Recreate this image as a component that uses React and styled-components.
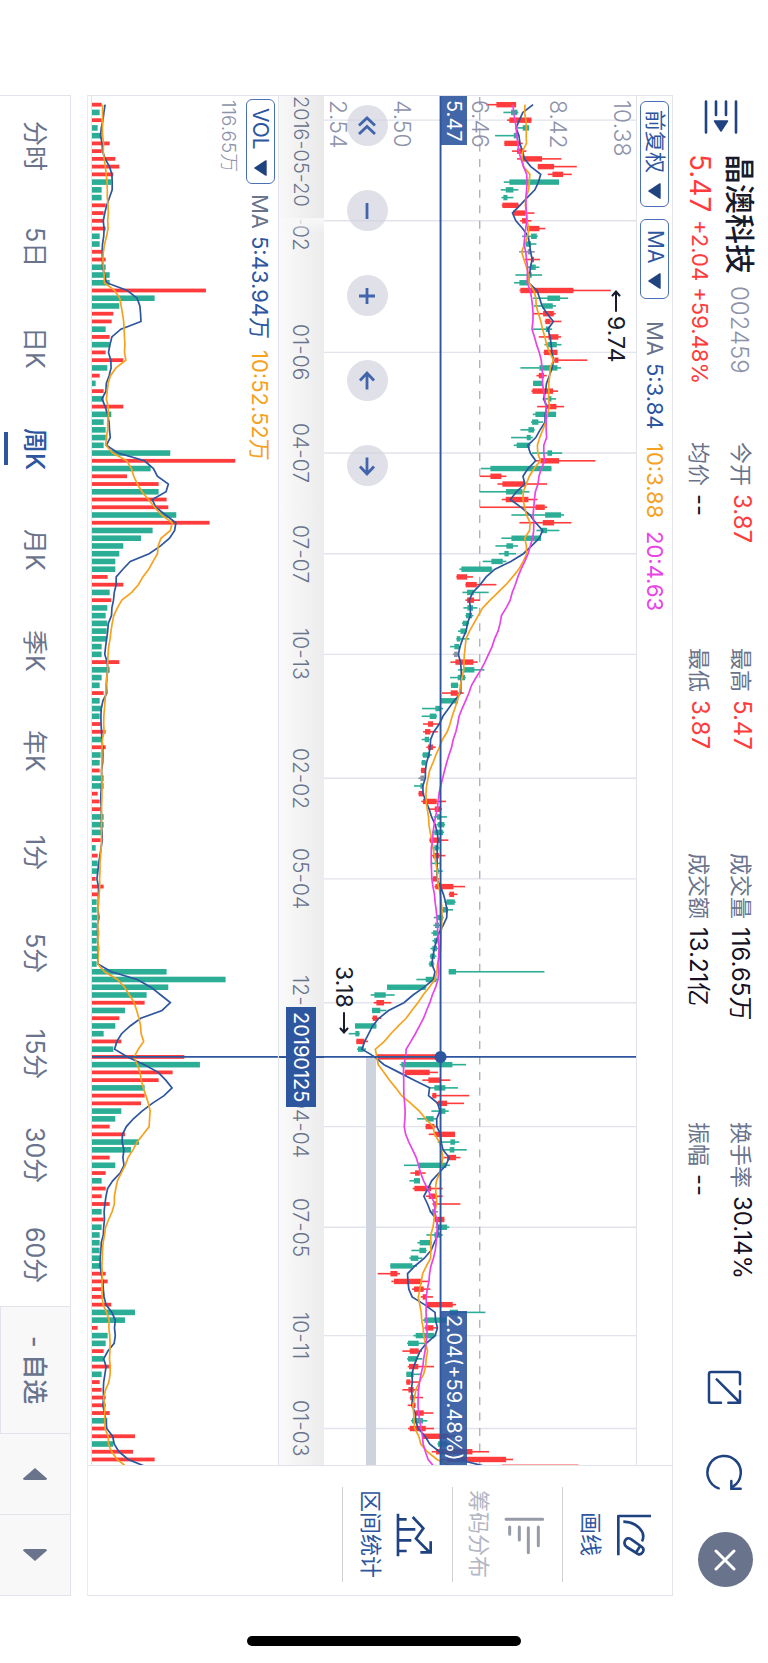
import React from 'react'
import styled, { createGlobalStyle } from 'styled-components'

const colors = {
  blue: '#2d569f',
  navy: '#1f4280',
  slate: '#69738c',
  muted: '#8d92a9',
  ink: '#171b2b',
  red: '#ff3b3b',
  green: '#2bae95',
  orange: '#f5a21f',
  pink: '#e845e6',
  line: '#e2e3eb',
}

// one week per row: [direction, low, body start, body end, high, volume]
const weeks = [
  [1, 497, 528, 587, 587, 65], [-1, 549, 572, 591, 594, 59], [1, 560, 567, 633, 633, 65], [-1, 590, 607, 626, 626, 53],
  [-1, 524, 580, 593, 593, 65], [1, 552, 552, 600, 607, 89], [1, 575, 590, 610, 618, 65], [1, 590, 603, 665, 723, 106],
  [1, 652, 652, 701, 769, 118], [1, 682, 696, 728, 754, 100], [-1, 550, 567, 716, 716, 94], [-1, 541, 556, 579, 594, 65],
  [-1, 543, 549, 561, 579, 65], [1, 544, 546, 594, 600, 77], [1, 575, 578, 615, 642, 71], [1, 599, 605, 618, 633, 71],
  [1, 620, 620, 657, 675, 77], [-1, 605, 632, 649, 652, 59], [-1, 610, 616, 632, 648, 59], [0, 596, 622, 630, 643, 65],
  [1, 612, 632, 641, 659, 77], [-1, 622, 630, 646, 657, 77], [-1, 585, 622, 634, 665, 89], [-1, 581, 597, 622, 622, 89],
  [1, 597, 600, 759, 871, 378], [-1, 638, 681, 719, 743, 224], [-1, 640, 665, 697, 707, 118], [1, 637, 668, 700, 706, 100],
  [1, 673, 675, 690, 723, 95], [-1, 637, 676, 689, 695, 77], [1, 655, 684, 714, 722, 89], [-1, 672, 681, 709, 723, 89],
  [1, 669, 671, 711, 711, 77], [1, 700, 702, 714, 801, 130], [-1, 600, 657, 711, 722, 82], [1, 648, 655, 671, 679, 59],
  [-1, 638, 638, 668, 668, 47], [1, 633, 636, 698, 713, 71], [-1, 667, 683, 693, 707, 71], [1, 650, 681, 708, 731, 130],
  [-1, 637, 645, 707, 707, 94], [-1, 632, 635, 654, 668, 71], [-1, 600, 624, 641, 643, 77], [-1, 572, 619, 631, 637, 82],
  [-1, 580, 589, 628, 630, 71], [-1, 635, 681, 695, 725, 271], [1, 645, 660, 716, 825, 466], [-1, 481, 510, 693, 693, 212],
  [1, 479, 510, 543, 558, 141], [1, 531, 546, 615, 680, 236], [-1, 477, 557, 606, 627, 236], [1, 544, 556, 624, 651, 260],
  [1, 479, 645, 673, 680, 265], [-1, 573, 674, 722, 731, 289], [1, 597, 667, 701, 753, 389], [-1, 648, 661, 680, 717, 218],
  [-1, 543, 573, 662, 662, 183], [-1, 525, 558, 578, 593, 130], [-1, 535, 552, 565, 587, 118], [-1, 487, 513, 547, 558, 106],
  [-1, 417, 423, 514, 516, 106], [1, 408, 409, 440, 458, 83], [1, 435, 436, 469, 528, 130], [-1, 426, 440, 460, 505, 89],
  [1, 435, 440, 461, 479, 94], [-1, 429, 441, 458, 471, 82], [-1, 435, 437, 455, 459, 77], [-1, 425, 427, 444, 446, 82],
  [-1, 413, 420, 438, 440, 80], [-1, 408, 409, 420, 447, 80], [-1, 389, 402, 416, 420, 65], [0, 397, 401, 412, 417, 65],
  [1, 390, 405, 459, 472, 118], [-1, 413, 430, 462, 492, 89], [-1, 389, 412, 434, 436, 65], [-1, 391, 392, 413, 414, 59],
  [1, 365, 391, 412, 430, 71], [-1, 361, 361, 413, 413, 59], [-1, 305, 345, 361, 368, 65], [-1, 304, 328, 348, 350, 59],
  [1, 308, 323, 338, 362, 62], [1, 308, 314, 330, 352, 77], [-1, 304, 313, 326, 328, 65], [1, 318, 323, 338, 346, 77],
  [-1, 306, 307, 329, 334, 62], [-1, 303, 304, 316, 318, 59], [1, 301, 302, 314, 316, 59], [0, 294, 300, 312, 316, 71],
  [-1, 281, 300, 308, 310, 71], [1, 294, 295, 310, 312, 53], [1, 303, 308, 349, 377, 59], [1, 326, 343, 360, 365, 65],
  [-1, 340, 350, 362, 380, 71], [-1, 348, 352, 372, 374, 71], [-1, 335, 342, 368, 371, 65], [1, 327, 328, 362, 384, 62],
  [-1, 336, 342, 355, 358, 47], [1, 334, 338, 356, 375, 53], [-1, 334, 346, 352, 360, 53], [-1, 340, 348, 355, 367, 53],
  [1, 334, 338, 352, 356, 47], [1, 342, 345, 399, 434, 71], [1, 385, 387, 401, 411, 53], [-1, 372, 378, 403, 406, 50],
  [-1, 364, 368, 383, 398, 50], [-1, 340, 350, 368, 370, 58], [-1, 339, 344, 356, 360, 50], [-1, 333, 338, 352, 354, 58],
  [-1, 336, 341, 352, 356, 50], [-1, 330, 336, 350, 353, 58], [-1, 328, 330, 344, 348, 53], [-1, 325, 327, 340, 342, 50],
  [-1, 385, 385, 407, 672, 260], [-1, 288, 316, 348, 352, 437], [-1, 200, 200, 316, 318, 265], [-1, 151, 162, 196, 223, 200],
  [1, 160, 168, 191, 213, 194], [-1, 155, 155, 180, 198, 135], [1, 155, 157, 170, 183, 118], [-1, 104, 104, 168, 168, 106],
  [-1, 85, 105, 117, 118, 71], [1, 108, 108, 132, 143, 124], [-1, 110, 113, 130, 137, 100], [1, 168, 168, 362, 362, 313],
  [-1, 238, 243, 396, 437, 360], [1, 252, 254, 328, 353, 278], [1, 306, 324, 362, 390, 236], [-1, 325, 342, 375, 413, 194],
  [1, 335, 336, 348, 447, 194], [1, 348, 352, 380, 431, 183], [-1, 333, 360, 375, 385, 124], [-1, 290, 316, 340, 348, 106],
  [1, 315, 316, 342, 353, 89], [1, 325, 343, 404, 404, 135], [-1, 352, 390, 404, 417, 177], [-1, 365, 388, 402, 439, 153],
  [1, 370, 380, 407, 420, 89], [-1, 251, 295, 378, 389, 106], [1, 270, 284, 298, 316, 77], [-1, 267, 281, 299, 299, 65],
  [1, 277, 282, 332, 367, 77], [1, 316, 325, 346, 367, 65], [1, 336, 339, 350, 420, 89], [0, 328, 335, 344, 353, 65],
  [1, 340, 343, 372, 372, 71], [-1, 345, 352, 380, 387, 65], [-1, 318, 342, 360, 367, 59], [-1, 291, 298, 332, 335, 59],
  [-1, 273, 297, 317, 319, 59], [-1, 267, 271, 294, 306, 59], [-1, 210, 210, 276, 290, 65], [1, 172, 210, 231, 239, 77],
  [1, 213, 221, 305, 325, 83], [1, 275, 281, 310, 330, 65], [1, 301, 307, 320, 338, 71], [1, 316, 320, 397, 407, 94],
  [-1, 387, 388, 413, 495, 165], [-1, 308, 312, 382, 386, 135], [1, 312, 315, 339, 350, 53], [-1, 279, 286, 342, 348, 83],
  [-1, 260, 263, 295, 315, 77], [1, 246, 268, 295, 305, 71], [-1, 260, 263, 290, 306, 71], [1, 262, 266, 294, 341, 89],
  [-1, 258, 258, 280, 304, 65], [1, 257, 258, 270, 297, 59], [1, 246, 264, 280, 296, 65], [1, 268, 270, 280, 308, 77],
  [1, 262, 274, 285, 286, 77], [1, 280, 285, 310, 339, 89], [-1, 272, 275, 308, 321, 82], [1, 263, 268, 316, 341, 77],
  [1, 305, 307, 385, 410, 165], [-1, 351, 353, 380, 390, 100], [1, 334, 347, 456, 506, 159], [1, 360, 380, 557, 578, 224],
  [1, 544, 544, 774, 774, 360],
]

// history before the first visible week, needed by the moving averages
const closesBefore = [542, 542, 542, 542, 542, 542, 542, 542, 542, 542, 590, 590, 590, 590, 590, 727, 683, 657, 536]
const volumesBefore = [60, 60, 60, 60, 60, 78, 78, 78, 78]

const LENGTH = 1371
const PRICE_SIZE = 312
const VOLUME_SIZE = 186
const CROSS = 123

const along = (i) => 8.7 + i * 7.753
const percent = (i) => `${(along(i) / LENGTH) * 100}%`
const priceX = (v) => (v - 11) / 3
const volumeX = (v) => (v - 36) / 3

const fill = (dir) => (dir > 0 ? colors.red : dir < 0 ? colors.green : '#8c92a4')

const average = (before, values, n, scale) => {
  const all = [...before, ...values]
  return values
    .map((_, i) => {
      const end = before.length + i + 1
      const sum = all.slice(end - n, end).reduce((a, b) => a + b, 0)
      return `${scale(sum / n).toFixed(1)},${along(i).toFixed(1)}`
    })
    .join(' ')
}

const closes = weeks.map(([dir, , a, b]) => (dir < 0 ? a : b))
const volumes = weeks.map((w) => w[5])

const dates = [
  [15, '09-02'], [32, '01-06'], [45, '04-07'], [58, '07-07'], [71, '10-13'], [87, '02-02'], [100, '05-04'],
  [116, '12-07'], [132, '04-04'], [145, '07-05'], [159, '10-11'], [171, '01-03'],
]
const gridWeeks = [2, ...dates.map((d) => d[0])]

const stats = [
  ['今开', '3.87', true], ['最高', '5.47', true], ['成交量', '116.65万'], ['换手率', '30.14%'],
  ['均价', '--'], ['最低', '3.87', true], ['成交额', '13.21亿'], ['振幅', '--'],
]

const periods = ['分时', '5日', '日K', '周K', '月K', '季K', '年K', '1分', '5分', '15分', '30分', '60分']

const PriceChart = () => (
  <Plot viewBox={`0 0 ${PRICE_SIZE} ${LENGTH}`} preserveAspectRatio="none" aria-label="周K">
    {gridWeeks.map((w) => (
      <line key={w} x1="0" x2={PRICE_SIZE} y1={along(w)} y2={along(w)} stroke={colors.line} strokeWidth="1.4" />
    ))}
    <line x1="155.7" x2="155.7" y1="0" y2={LENGTH} stroke="#a3a6b5" strokeWidth="1.2" strokeDasharray="8 7.5" strokeDashoffset="-1" />
    <rect x="42" y={along(CROSS)} width="10" height={LENGTH} fill="#cfd3de" />
    {weeks.map(([dir, low, a, b, high], i) => (
      <g key={i} fill={fill(dir)}>
        <rect x={priceX(low)} y={along(i) - 0.8} width={(high - low) / 3} height="1.6" />
        <rect x={priceX(a)} y={along(i) - 2.7} width={(b - a) / 3} height="5.4" />
      </g>
    ))}
    <g fill="none" strokeWidth="1.7">
      <polyline points={average(closesBefore, closes, 5, priceX)} stroke={colors.blue} />
      <polyline points={average(closesBefore, closes, 10, priceX)} stroke={colors.orange} />
      <polyline points={average(closesBefore, closes, 20, priceX)} stroke={colors.pink} />
    </g>
    <g stroke={colors.blue} strokeWidth="1.9">
      <line x1="116.5" x2="116.5" y1="0" y2={LENGTH} />
      <line x1="0" x2={PRICE_SIZE} y1={along(CROSS)} y2={along(CROSS)} />
    </g>
    <circle cx="116.5" cy={along(CROSS)} r="6" fill={colors.blue} />
  </Plot>
)

const VolumeChart = () => (
  <Plot viewBox={`0 0 ${VOLUME_SIZE} ${LENGTH}`} preserveAspectRatio="none" aria-label="VOL">
    {weeks.map(([dir, , , , , v], i) => {
      const up = dir > 0 || i === 19
      const size = up ? 3.8 : 5.6
      return <rect key={i} x="0" y={along(i) - size / 2} width={volumeX(v)} height={size} fill={fill(up ? 1 : -1)} />
    })}
    <g fill="none" strokeWidth="1.7">
      <polyline points={average(volumesBefore, volumes, 5, volumeX)} stroke={colors.blue} />
      <polyline points={average(volumesBefore, volumes, 10, volumeX)} stroke={colors.orange} />
    </g>
    <line x1="0" x2={VOLUME_SIZE} y1={along(CROSS)} y2={along(CROSS)} stroke={colors.blue} strokeWidth="1.9" />
  </Plot>
)

const Caret = () => (
  <svg width="13" height="16" viewBox="0 0 13 16" aria-hidden="true">
    <path d="M0.500 7.400 L11.500 0.300 Q12.700 -0.200 12.700 1 V15 Q12.700 16.200 11.500 15.700 L0.500 8.600 Q-0.200 8 0.500 7.400 Z" fill={colors.navy} />
  </svg>
)

const Arrow = ({ down }) => (
  <svg width="12" height="22" viewBox="0 0 12 22" fill="none" stroke={colors.ink} strokeWidth="2" strokeLinecap="round" aria-hidden="true">
    {down ? <path d="M6 1 V20 M2.500 16.500 L6 20.500 L9.500 16.500" /> : <path d="M6 21 V2 M2.500 5.500 L6 1.500 L9.500 5.500" />}
  </svg>
)

const controls = [
  ['快退', 'M4 11.500 L12 4 L20 11.500 M4 20 L12 12.500 L20 20'],
  ['缩小', 'M12 4 V20'],
  ['放大', 'M12 4 V20 M4 12 H20'],
  ['左移', 'M12 4 V20.500 M5 11.500 L12 4 L19 11.500'],
  ['右移', 'M12 3.500 V20 M5 12.500 L12 20 L19 12.500'],
]

const App = () => {
  return (
    <>
      <GlobalStyle />
      <Screen>
        <Content>
          <Header>
            <IconButton aria-label="菜单" $margin="5px 0 20px">
              <svg width="34" height="34" viewBox="0 0 34 34" fill="none" stroke={colors.navy} strokeWidth="2.600" strokeLinecap="round">
                <path d="M2 1.500 V32.500 M32 1.500 V32.500 M12 1.500 V15 M22 1.500 V15" />
                <path d="M10.500 21 H23.500 L17 31 Z" fill={colors.navy} strokeWidth="1.500" strokeLinejoin="round" />
              </svg>
            </IconButton>
            <Stock>
              <StockLine>
                <Name>晶澳科技</Name>
                <Code>002459</Code>
              </StockLine>
              <StockLine>
                <Price>5.47</Price>
                <Change>+2.04 +59.48%</Change>
              </StockLine>
            </Stock>
            <Stats>
              {stats.map(([label, value, up]) => (
                <Stat key={label}>
                  <dt>{label}</dt>
                  <StatValue $up={up}>{value}</StatValue>
                </Stat>
              ))}
            </Stats>
            <Actions>
              <IconButton aria-label="分享">
                <svg width="36" height="36" viewBox="0 0 108 108" fill="none" stroke={colors.navy} strokeWidth="7.500" strokeLinecap="round" strokeLinejoin="round">
                  <path d="M99 43 V12 Q99 6 93 6 H12 Q6 6 6 12 V92 Q6 98 12 98 H42" />
                  <path d="M29 28 L97 96 M99 64 V98 H64" />
                </svg>
              </IconButton>
              <IconButton aria-label="刷新">
                <svg width="38" height="38" viewBox="0 0 114 114" fill="none" stroke={colors.navy} strokeWidth="7.500" strokeLinecap="round">
                  <path d="M38 106 A50 50 0 1 1 81 101" />
                  <path d="M76 84 V107 H104" />
                </svg>
              </IconButton>
              <CloseButton aria-label="关闭">
                <svg width="22" height="22" viewBox="0 0 22 22" stroke="#fff" strokeWidth="3" strokeLinecap="round">
                  <path d="M2 2 L20 20 M20 2 L2 20" />
                </svg>
              </CloseButton>
            </Actions>
          </Header>

          <Body>
            <Charts>
              <Toolbar>
                <Picker>前复权 <Caret /></Picker>
                <Picker>MA <Caret /></Picker>
                <Legend>
                  <Tint $color={colors.slate}>MA</Tint>
                  <Tint $color={colors.blue}>5:3.84</Tint>
                  <Tint $color={colors.orange} $gap="6px">10:3.88</Tint>
                  <Tint $color={colors.pink} $gap="6px">20:4.63</Tint>
                </Legend>
              </Toolbar>

              <PricePanel>
                <PriceChart />
                <Scale>
                  <span>10.38</span>
                  <span>8.42</span>
                  <span>6.46</span>
                  <span>4.50</span>
                  <span>2.54</span>
                </Scale>
                <PriceBadge>5.47</PriceBadge>
                <ChangeBadge>2.04(+59.48%)</ChangeBadge>
                <Note style={{ top: percent(24) }} $right="11px">
                  <Arrow />9.74
                </Note>
                <Note style={{ bottom: `${100 - (along(120) / LENGTH) * 100}%` }} $right="283px">
                  3.18<Arrow down />
                </Note>
                <Controls>
                  {controls.map(([label, d]) => (
                    <RoundButton key={label} aria-label={label}>
                      <svg width="24" height="24" viewBox="0 0 24 24" fill="none" stroke="#4264ab" strokeWidth="2.800">
                        <path d={d} />
                      </svg>
                    </RoundButton>
                  ))}
                </Controls>
              </PricePanel>

              <DateAxis>
                {dates.map(([week, text], i) => (
                  <DateCell key={text} style={{ flexGrow: i ? week - dates[i - 1][0] : along(week) / 7.753 }}>
                    <DateTick>{text}</DateTick>
                  </DateCell>
                ))}
                <DateCell style={{ flexGrow: (LENGTH - along(171)) / 7.753 }} />
                <StartDate>2016-05-20</StartDate>
                <AxisLine style={{ top: percent(CROSS) }} />
                <DateBadge style={{ top: percent(CROSS) }}>20190125</DateBadge>
              </DateAxis>

              <VolumePanel>
                <VolumeChart />
                <VolumeHead>
                  <Picker>VOL <Caret /></Picker>
                  <Legend>
                    <Tint $color={colors.slate}>MA</Tint>
                    <Tint $color={colors.blue}>5:43.94万</Tint>
                    <Tint $color={colors.orange} $gap="4px">10:52.52万</Tint>
                  </Legend>
                </VolumeHead>
                <VolumeMax>116.65万</VolumeMax>
              </VolumePanel>
            </Charts>

            <Tools>
              <Tool>
                <svg width="36" height="42" viewBox="0 0 108 126" fill="none" stroke={colors.navy} strokeWidth="8" strokeLinejoin="round">
                  <path d="M105 6 H7 V124" />
                  <path d="M22 23 C62 24 92 54 78 82" />
                  <path d="M46 76 Q33 68 27 80 Q22 92 32 99 L66 120 Q74 124 80 115 Q86 106 78 99 Z M61 114 L73 95" />
                </svg>
                画线
              </Tool>
              <Tool $off>
                <svg width="40" height="38" viewBox="0 0 120 114" fill="none" stroke="#979ba7" strokeWidth="9" strokeLinecap="round">
                  <path d="M6 10 H116 M17 33 V55 M46 33 V72 M73 35 V110 M103 33 V89" />
                </svg>
                筹码分布
              </Tool>
              <Tool>
                <svg width="36" height="44" viewBox="0 0 108 132" fill="none" stroke={colors.navy} strokeWidth="8">
                  <path d="M6 2 V130 M6 19 H32 M6 49 H58 M6 82 H46 M6 114 H32" />
                  <path d="M50 12 L82 46 L60 77 L100 117 M104 85 V118 H73" />
                </svg>
                区间统计
              </Tool>
            </Tools>
          </Body>

          <TabBar>
            {periods.map((p) => (
              <Tab key={p} $active={p === '周K'}>{p}</Tab>
            ))}
            <Watch>- 自选</Watch>
            <Step aria-label="上一个">
              <svg width="24" height="12" viewBox="0 0 24 12"><path d="M12 0 L24 10.500 Q24 12 22 12 H2 Q0 12 0 10.500 Z" fill={colors.slate} /></svg>
            </Step>
            <Step aria-label="下一个">
              <svg width="24" height="12" viewBox="0 0 24 12"><path d="M12 12 L24 1.500 Q24 0 22 0 H2 Q0 0 0 1.500 Z" fill={colors.slate} /></svg>
            </Step>
          </TabBar>
        </Content>
        <HomeBar />
      </Screen>
    </>
  )
}

const GlobalStyle = createGlobalStyle`
  * {
    box-sizing: border-box;
  }

  body {
    margin: 0;
    background: #fff;
  }

  button {
    margin: 0;
    padding: 0;
    border: 0;
    background: none;
    color: inherit;
    font: inherit;
    writing-mode: inherit;
    text-orientation: inherit;
  }

  svg {
    display: block;
    flex: none;
  }
`

// the whole screen reads sideways: inline runs down, blocks run right to left
const Screen = styled.main`
  writing-mode: vertical-rl;
  text-orientation: sideways;
  display: flex;
  width: 100%;
  height: 100vh;
  padding: 95px 0 17px;
  background: #fff;
  font-family: Inter, 'Noto Sans CJK SC', sans-serif;
  font-size: 22px;
  white-space: nowrap;
`

const Content = styled.div`
  display: flex;
  flex-direction: column;
  flex: 1;
  width: 100%;
`

const Header = styled.header`
  display: flex;
  align-items: center;
  flex: none;
  width: 95px;
`

const IconButton = styled.button`
  flex: none;
  margin: ${(p) => p.$margin || 0};
`

const Stock = styled.div`
  display: flex;
  flex-direction: column;
  flex: none;
  height: 288px;
  padding-right: 2px;
`

const StockLine = styled.div`
  display: flex;
  align-items: center;
  width: 40px;
`

const Name = styled.h1`
  margin: 0 0 12px;
  color: ${colors.ink};
  font-size: 30px;
  font-weight: 500;
  line-height: 40px;
`

const Code = styled.span`
  color: ${colors.muted};
  font-size: 24px;
  font-weight: 300;
`

const Price = styled.strong`
  margin-bottom: 8px;
  color: ${colors.red};
  font-size: 28px;
  font-weight: 400;
`

const Change = styled.span`
  color: ${colors.red};
  font-size: 22px;
`

const Stats = styled.dl`
  display: grid;
  grid-template-columns: 206px 205px 269px 1fr;
  grid-template-rows: 42px 42px;
  flex: 1;
  margin: 0;
  padding-left: 2px;
`

const Stat = styled.div`
  display: flex;
  align-items: center;
  gap: 8px;
  color: ${colors.slate};
`

const StatValue = styled.dd`
  margin: 0;
  color: ${(p) => (p.$up ? colors.red : '#170f22')};
  font-size: 24px;
`

const Actions = styled.div`
  display: flex;
  align-items: center;
  gap: 47px;
  padding: 0 0 9px 9px;
`

const CloseButton = styled.button`
  display: flex;
  align-items: center;
  justify-content: center;
  width: 55px;
  height: 55px;
  border-radius: 50%;
  background: ${colors.slate};
  margin-top: -6px;
`

const Body = styled.section`
  display: flex;
  flex: 1;
  min-width: 0;
  border: 1px solid ${colors.line};
  border-left-color: #ececf0;
`

const Charts = styled.div`
  display: flex;
  flex-direction: column;
  flex: 1;
  min-width: 0;
  padding-left: 3px;
`

const Toolbar = styled.div`
  display: flex;
  align-items: center;
  flex: none;
  gap: 12px;
  width: 35px;
  padding-top: 5px;
`

const Picker = styled.button`
  display: flex;
  align-items: center;
  justify-content: center;
  gap: 10px;
  width: 29px;
  min-height: 80px;
  padding: 8px 0 7px;
  border: 1px solid #4a70b5;
  border-radius: 6px;
  color: ${colors.blue};
  font-size: 21px;
  line-height: 26px;
`

const Legend = styled.div`
  display: flex;
  gap: 7px;
  padding-top: 10px;
  line-height: 28px;
`

const Tint = styled.span`
  margin-top: ${(p) => p.$gap || 0};
  color: ${(p) => p.$color};
`

const PricePanel = styled.div`
  position: relative;
  flex: 314 1 0;
  min-width: 0;
  border-right: 1px solid ${colors.line};
`

const Plot = styled.svg`
  width: 100%;
  height: 100%;
`

const Scale = styled.div`
  position: absolute;
  inset: 0;
  display: grid;
  grid-template-rows: 1fr 2fr 2fr 2fr 1fr;
  align-items: center;
  padding-top: 4px;
  color: ${colors.muted};
  font-size: 23px;
  font-weight: 300;
  line-height: 28px;

  span:first-child {
    align-self: start;
  }

  span:last-child {
    align-self: end;
  }
`

const Badge = styled.span`
  position: absolute;
  color: #fff;
  background: rgba(45, 86, 159, 0.9);
  font-size: 20px;
  line-height: 27px;
`

const PriceBadge = styled(Badge)`
  top: 0;
  left: 116px;
  padding: 4px 0 3px;
`

const ChangeBadge = styled(Badge)`
  bottom: 0;
  left: 116px;
  padding: 4px 0;
`

const Note = styled.span`
  position: absolute;
  right: ${(p) => p.$right};
  display: flex;
  align-items: center;
  justify-content: center;
  gap: 4px;
  width: 18px;
  color: ${colors.ink};
  font-size: 23px;
  line-height: 28px;
`

const Controls = styled.div`
  position: absolute;
  top: 9px;
  left: 23px;
  display: flex;
  gap: 44px;
`

const RoundButton = styled.button`
  display: flex;
  align-items: center;
  justify-content: center;
  width: 41px;
  height: 41px;
  border-radius: 50%;
  background: rgba(206, 207, 220, 0.65);
`

const DateAxis = styled.div`
  position: relative;
  display: flex;
  align-items: center;
  flex: none;
  width: 45px;
  padding-right: 2px;
  background: linear-gradient(to left, #ececec, #fafafa);
  color: ${colors.slate};
  font-size: 21px;
  font-weight: 300;
`

const DateCell = styled.div`
  display: flex;
  justify-content: flex-end;
  flex: 0 0 0;
`

const DateTick = styled.span`
  display: flex;
  justify-content: center;
  height: 0;
`

const StartDate = styled.span`
  position: absolute;
  inset: 0 0 auto 0;
  height: 122px;
  background: linear-gradient(to left, #e9e9e9, #f8f8f8);
  font-size: 20px;
  line-height: 47px;

  &::after {
    content: '';
    position: absolute;
    inset: 100% 0 auto 0;
    height: 16px;
    background: linear-gradient(#f8f8f8, rgba(248, 248, 248, 0));
  }
`

const AxisLine = styled.span`
  position: absolute;
  left: 0;
  right: 0;
  height: 2px;
  margin-top: -1px;
  background: ${colors.blue};
`

const DateBadge = styled(Badge)`
  left: 7px;
  height: 100px;
  margin-top: -50px;
  background: ${colors.blue};
  font-weight: 400;
  line-height: 30px;
  text-align: center;
`

const VolumePanel = styled.div`
  position: relative;
  flex: 187 1 0;
  min-width: 0;
  border-right: 1px solid ${colors.line};
  border-left: 1px solid ${colors.line};
`

const VolumeHead = styled.div`
  position: absolute;
  top: 3px;
  right: 3px;
  display: flex;
  align-items: center;
`

const VolumeMax = styled.span`
  position: absolute;
  top: 4px;
  right: 38px;
  color: ${colors.muted};
  font-size: 19px;
  font-weight: 300;
  line-height: 24px;
`

const Tools = styled.nav`
  display: flex;
  flex-direction: column;
  flex: none;
  height: 130px;
  padding: 21px 0 13px;
  border-top: 1px solid ${colors.line};
`

const Tool = styled.button`
  display: flex;
  flex-direction: column;
  align-items: center;
  justify-content: center;
  gap: 10px;
  width: 110px;
  padding-right: 8px;
  border-left: 1px solid #cfcfd4;
  color: ${(p) => (p.$off ? '#b3b6c3' : colors.blue)};
  line-height: 30px;
`

const TabBar = styled.nav`
  display: flex;
  flex: none;
  width: 71px;
  margin-right: 16px;
  border: solid ${colors.line};
  border-width: 1px 1px 1px 0;
  color: ${colors.slate};
  font-size: 25px;
`

const Tab = styled.button`
  position: relative;
  flex: 1 1 0;
  padding-left: 4px;
  color: ${(p) => (p.$active ? colors.blue : 'inherit')};
  font-weight: ${(p) => (p.$active ? 500 : 400)};

  &::after {
    content: '';
    position: absolute;
    left: 4px;
    top: calc(50% - 17px);
    width: 4px;
    height: 33px;
    background: ${(p) => (p.$active ? colors.blue : 'transparent')};
  }
`

const Watch = styled.button`
  flex: 0 0 127px;
  padding-left: 3px;
  border-top: 1px solid ${colors.line};
  border-left: 1px solid ${colors.line};
  background: #f8f8f8;
  font-weight: 500;
`

const Step = styled.button`
  display: flex;
  align-items: center;
  justify-content: center;
  flex: 0 0 81px;
  border-top: 1px solid ${colors.line};
  background: #f8f8f8;
`

const HomeBar = styled.div`
  align-self: center;
  width: 274px;
  height: 10px;
  margin-top: 40px;
  border-radius: 5px;
  background: #000;
`

export default App
